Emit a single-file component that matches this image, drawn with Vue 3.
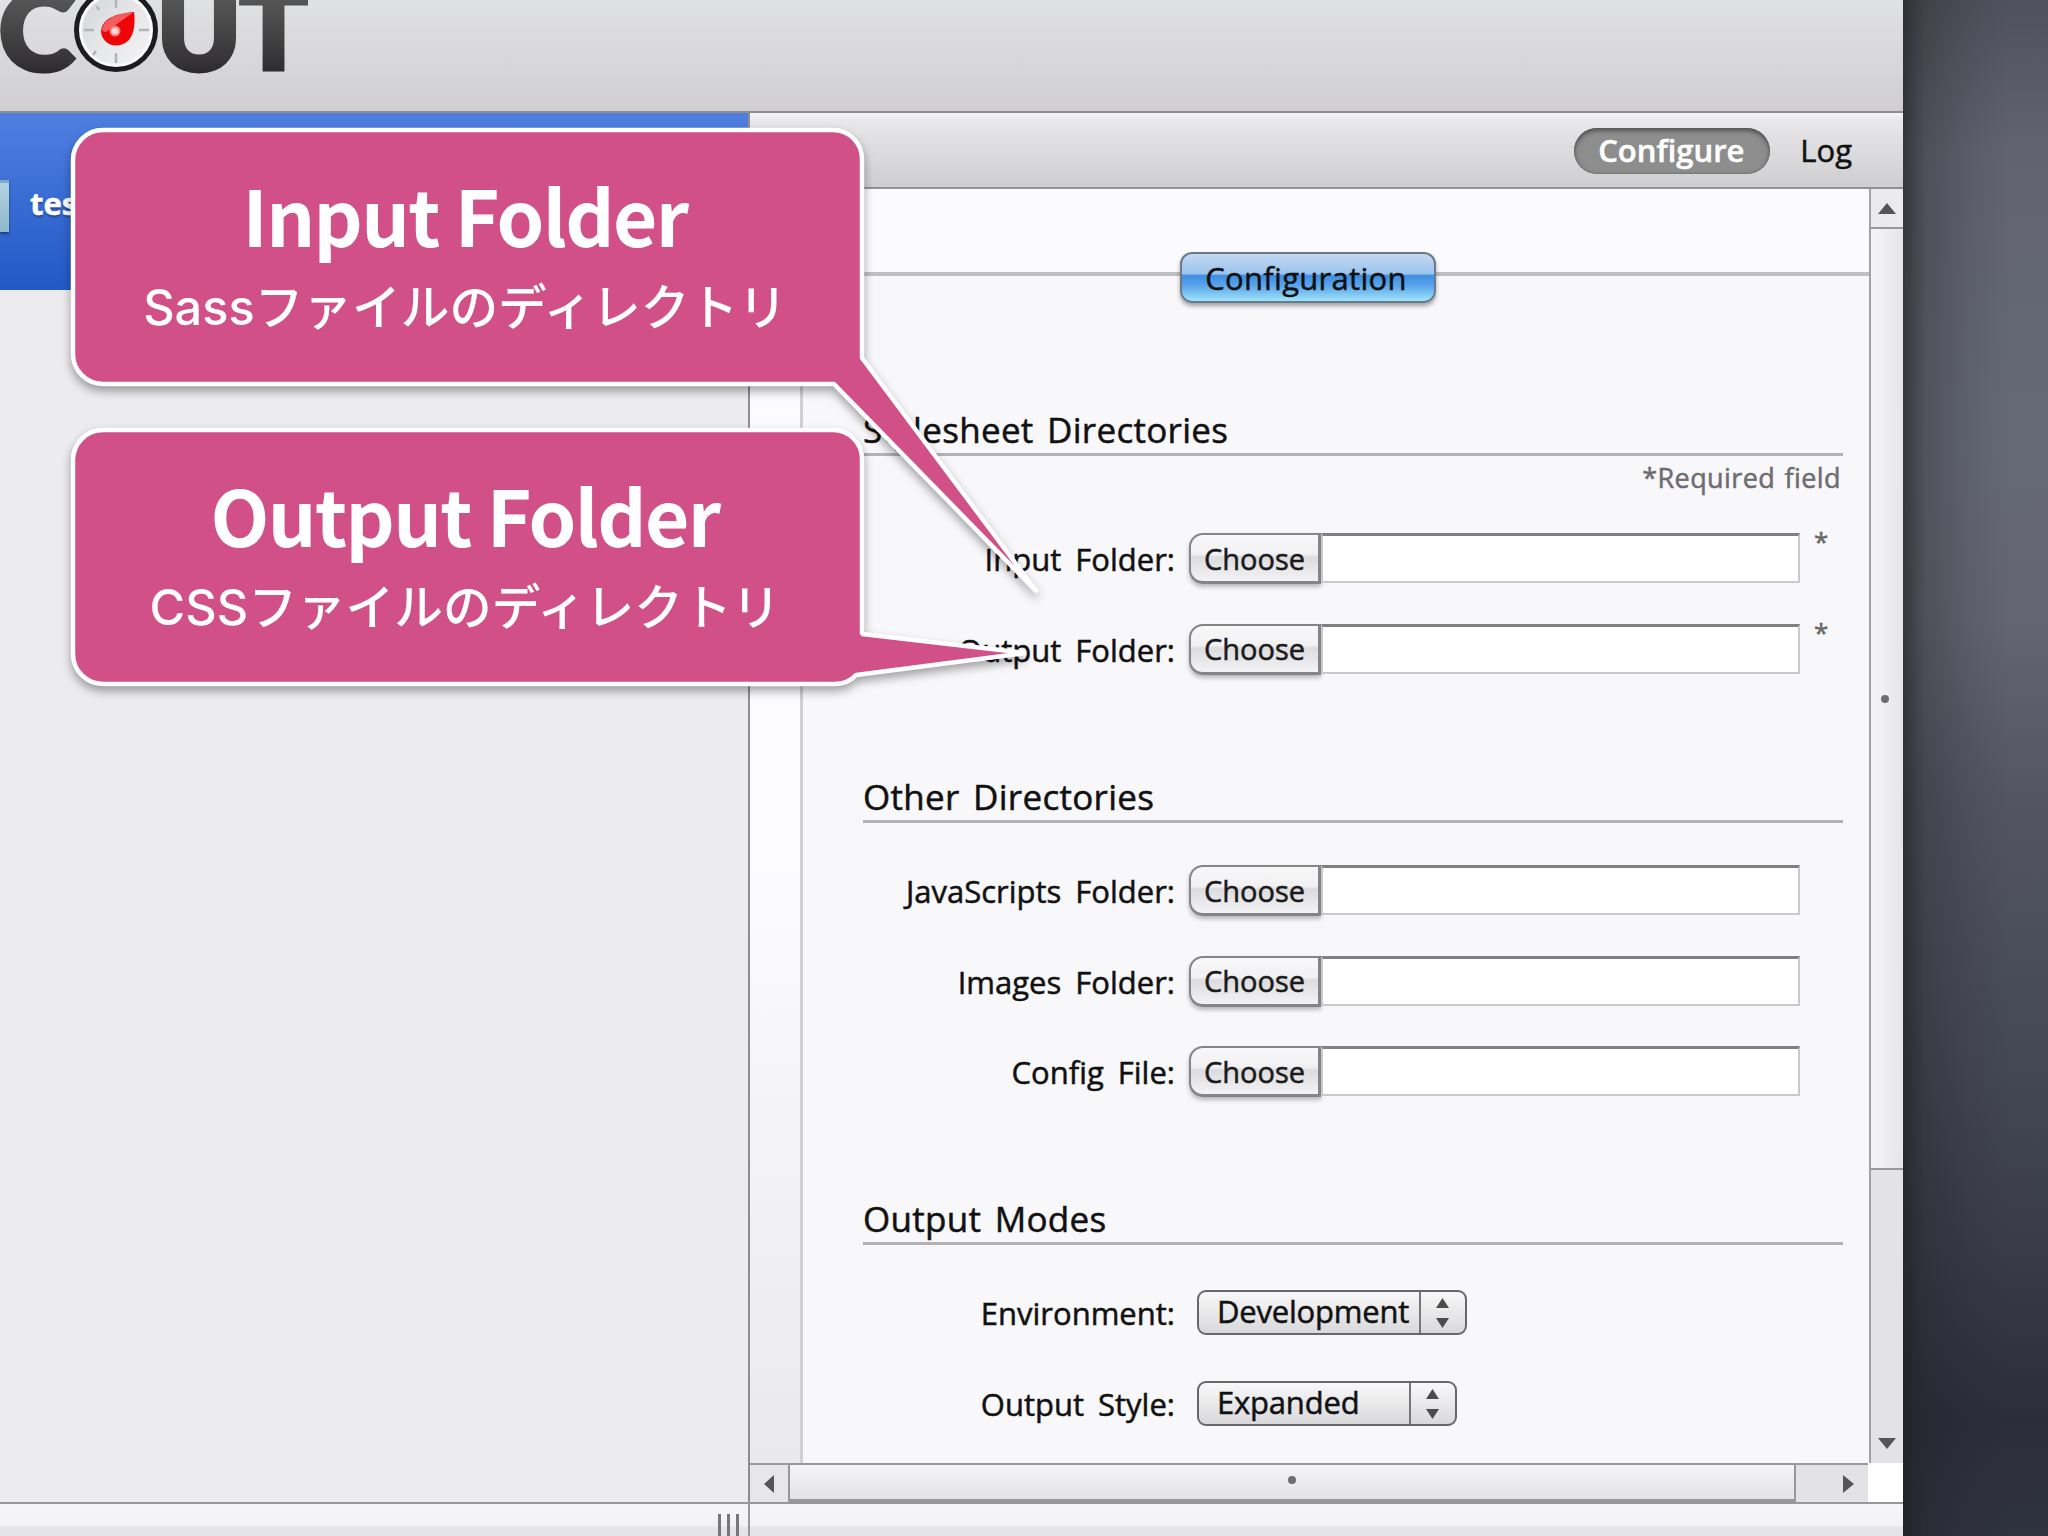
<template>
  <div class="desktop">
    <div class="window">
      <header class="titlebar">
        <svg class="logo" width="320" height="111" viewBox="0 0 320 111">
          <defs>
            <linearGradient id="ink" x1="0" y1="-10" x2="0" y2="74" gradientUnits="userSpaceOnUse">
              <stop offset="0" stop-color="#5a5a5b" />
              <stop offset="0.6" stop-color="#414142" />
              <stop offset="1" stop-color="#2d2a2d" />
            </linearGradient>
            <linearGradient id="dial" x1="0" y1="0" x2="1" y2="1">
              <stop offset="0" stop-color="#d4d5d7" />
              <stop offset="0.5" stop-color="#e6e7e9" />
              <stop offset="1" stop-color="#f4f4f6" />
            </linearGradient>
          </defs>
          <g class="logo-text" fill="url(#ink)" stroke="url(#ink)">
            <text x="-1" y="69.500" textLength="75" lengthAdjust="spacingAndGlyphs">C</text>
            <text x="157" y="69.500" textLength="84" lengthAdjust="spacingAndGlyphs">U</text>
            <text x="240" y="68.500" textLength="67" lengthAdjust="spacingAndGlyphs">T</text>
          </g>
          <circle cx="116" cy="30" r="39.5" fill="#fbfbfc" stroke="#1d1d1f" stroke-width="5" />
          <circle cx="116" cy="30" r="34" fill="url(#dial)" />
          <path d="M116 0v8M116 53v10M84 30h10M139 30h10M97 6l2 4M93 55l3-4" stroke="#b4b4b8" stroke-width="2.5" />
          <path d="M134 12C136 28 133 45 116 45.500C107 45.500 101 38 101 31C102 17 120 13 134 12Z" fill="#ee0508" />
          <path d="M133 12.500C118 13 102 19 102 31L106 32Z" fill="#fff" opacity="0.35" />
          <circle cx="115" cy="31" r="4.500" fill="#fbd5d5" stroke="#f27a7a" stroke-width="2" />
        </svg>
      </header>

      <div class="main">
        <aside class="sidebar">
          <div class="project">
            <span class="folder"></span>
            <span class="project-name">test</span>
          </div>
          <div class="sidebar-body"></div>
        </aside>

        <section class="pane">
          <nav class="tabs">
            <button class="tab active">Configure</button>
            <button class="tab">Log</button>
          </nav>
          <div class="viewport">
            <div class="page">
              <div class="page-top"><span class="pill">Configuration</span></div>
              <div class="page-body">
                <div class="gutter"></div>
                <form class="form">
                  <fieldset v-for="group in groups" :key="group.title" :class="group.name">
                    <h2><span>{{ group.title }}</span></h2>
                    <p v-if="group.note" class="note">{{ group.note }}</p>
                    <div class="rows">
                      <div v-for="field in group.fields" :key="field.label" class="row">
                        <label>{{ field.label }}</label>
                        <div v-if="field.value" class="select">
                          <span class="value" :style="{ width: field.width + 'px' }">{{ field.value }}</span>
                          <svg class="arrows" width="44" height="41" viewBox="0 0 44 41">
                            <path d="M15 16l6.500-10 6.500 10zM15 26l6.500 10 6.500-10z" fill="#4c4c4f" />
                          </svg>
                        </div>
                        <template v-else>
                          <button type="button" class="choose">Choose</button>
                          <div class="path"></div>
                          <span v-if="field.required" class="star">*</span>
                        </template>
                      </div>
                    </div>
                  </fieldset>
                </form>
              </div>
            </div>
            <div class="vbar">
              <div class="vbtn"><svg width="18" height="12"><path d="M0 11L9 0l9 11z" fill="#555558" /></svg></div>
              <div class="vthumb"><i class="dot"></i></div>
              <div class="vtrack"><svg width="18" height="12"><path d="M0 0h18L9 11z" fill="#555558" /></svg></div>
            </div>
          </div>
          <div class="hbar">
            <div class="hbtn"><svg width="11" height="18"><path d="M10 0v18L0 9z" fill="#555558" /></svg></div>
            <div class="hthumb"><i class="dot"></i></div>
            <div class="htrack"><svg width="11" height="18"><path d="M0 0l11 9L0 18z" fill="#555558" /></svg></div>
            <div class="corner"></div>
          </div>
        </section>
      </div>

      <footer class="footer">
        <div class="footer-left"><i></i><i></i><i></i></div>
      </footer>
    </div>

    <div v-for="c in callouts" :key="c.title" class="callout" :class="c.name">
      <svg class="bubble" width="990" height="480" viewBox="0 0 990 480">
        <path :d="c.shape" fill="#d15087" stroke="#fff" stroke-width="4.500" stroke-linejoin="bevel" />
      </svg>
      <div class="callout-text">
        <strong>{{ c.title }}</strong>
        <span>{{ c.text }}</span>
      </div>
    </div>
  </div>
</template>

<script setup>
const groups = [
  {
    name: 'stylesheets',
    title: 'Stylesheet Directories',
    note: '*Required field',
    fields: [
      { label: 'Input Folder:', required: true },
      { label: 'Output Folder:', required: true }
    ]
  },
  {
    name: 'others',
    title: 'Other Directories',
    fields: [
      { label: 'JavaScripts Folder:' },
      { label: 'Images Folder:' },
      { label: 'Config File:' }
    ]
  },
  {
    name: 'modes',
    title: 'Output Modes',
    fields: [
      { label: 'Environment:', value: 'Development', width: 222 },
      { label: 'Output Style:', value: 'Expanded', width: 212 }
    ]
  }
]

// bubble outlines, relative to the top left corner of each callout
const callouts = [
  {
    name: 'input',
    title: 'Input Folder',
    text: 'Sassファイルのディレクトリ',
    shape: 'M32 2H762A29 29 0 0 1 791 31V230L966 464L763 256H32A30 30 0 0 1 2 226V32A30 30 0 0 1 32 2Z'
  },
  {
    name: 'output',
    title: 'Output Folder',
    text: 'CSSファイルのディレクトリ',
    shape: 'M32 2H762A29 29 0 0 1 791 31V206L955 225L785 247Q777 256 763 256H32A30 30 0 0 1 2 226V32A30 30 0 0 1 32 2Z'
  }
]
</script>

<style>
body {
  overflow: hidden;
}
</style>

<style scoped>
* {
  box-sizing: border-box;
}

.desktop {
  position: relative;
  width: 2048px;
  height: 1536px;
  overflow: hidden;
  font-family: "Open Sans", "Noto Sans", sans-serif;
  color: #111;
  background:
    linear-gradient(to right, rgba(30, 30, 30, 0.65) 1903px, rgba(30, 30, 34, 0.3) 1925px, rgba(30, 30, 34, 0.1) 1970px, rgba(30, 30, 34, 0) 2010px),
    linear-gradient(#4f525c 0, #616470 150px, #666a76 450px, #636571 620px, #535562 800px, #454855 1050px, #393b48 1250px, #2c2d3a 1420px, #2f323f 1536px);
}

.window {
  display: flex;
  flex-direction: column;
  width: 1903px;
  height: 1536px;
  -webkit-text-stroke: 0.5px;
}

.titlebar {
  flex: 0 0 113px;
  border-bottom: 2px solid #8e8d91;
  background: linear-gradient(#e0e1e3, #d0ced1);
}

.logo {
  display: block;
}

.logo-text {
  font: 900 108px Lato, sans-serif;
  stroke-width: 5px;
  -webkit-text-stroke: 0;
}

.logo-text text {
  stroke: url(#ink);
  stroke-width: 5px;
}

.main {
  display: flex;
  flex: 0 0 1389px;
  min-height: 0;
}

.sidebar {
  flex: 0 0 750px;
  border-right: 2px solid #8e8d92;
  background: #ecebee;
}

.project {
  display: flex;
  align-items: center;
  height: 177px;
  background: linear-gradient(#4f7fe0, #2259c6);
}

.folder {
  width: 9px;
  height: 52px;
  margin-top: 8px;
  background: linear-gradient(#b3d2df, #8fb9cf);
  border-top: 3px solid #7ea9c6;
  box-shadow: 0 2px 3px rgba(0, 0, 0, 0.4);
}

.project-name {
  margin-left: 21px;
  margin-top: 2px;
  font-size: 31px;
  font-weight: 700;
  color: #fff;
  text-shadow: 0 2px 2px rgba(0, 0, 0, 0.35);
}

.pane {
  display: flex;
  flex-direction: column;
  flex: 1;
  min-height: 0;
}

.tabs {
  display: flex;
  justify-content: flex-end;
  align-items: center;
  flex: 0 0 76px;
  padding: 2px 39px 0 0;
  border-bottom: 2px solid #929195;
  background: linear-gradient(#f7f6f8 0, #e8e7e9 8px, #cecdcf);
}

.tab {
  height: 46px;
  padding: 0 12px 3px;
  border: 0;
  background: none;
  font: 500 31px/40px "Open Sans", "Noto Sans", sans-serif;
  color: #111;
}

.tab.active {
  width: 196px;
  margin-right: 18px;
  padding: 0 2px 3px 0;
  border-radius: 23px;
  background: #8d8d8d;
  box-shadow: inset 0 3px 4px #555, inset 0 0 3px #666;
  font-weight: 600;
  color: #fff;
}

.viewport {
  display: flex;
  flex: 1;
  min-height: 0;
}

.page {
  display: flex;
  flex-direction: column;
  flex: 1;
  overflow: hidden;
  background: #f8f7fa;
}

.page-top {
  display: flex;
  justify-content: center;
  align-items: flex-end;
  flex: 0 0 87px;
  padding-right: 4px;
  border-bottom: 4px solid #bfbec1;
  background: #fbfafc;
}

.pill {
  z-index: 1;
  width: 256px;
  height: 51px;
  margin-bottom: -31px;
  padding-right: 3px;
  border: 2px solid #6c7a8c;
  border-radius: 12px;
  background: linear-gradient(#c3d8f0 0, #9cc4ee 42%, #3f8de2 46%, #5ba5ea 68%, #9fe4fb 100%);
  box-shadow: 0 3px 4px rgba(0, 0, 0, 0.35);
  font-size: 31px;
  line-height: 48px;
  letter-spacing: 0.3px;
  text-align: center;
}

.page-body {
  display: flex;
  flex: 1;
  min-height: 0;
}

.gutter {
  flex: 0 0 53px;
  border-right: 3px solid #d0cfd2;
  background: linear-gradient(#fcfbfd 50%, #e9e8eb);
}

.form {
  flex: 1;
  padding: 127px 26px 0 60px;
}

fieldset {
  margin: 0;
  padding: 0;
  border: 0;
}

.stylesheets {
  height: 367px;
}

.others {
  height: 422px;
}

h2 {
  height: 53px;
  margin: 0;
  border-bottom: 3px solid #b3b2b5;
  font-size: 35px;
  font-weight: 400;
  line-height: 53px;
  letter-spacing: 0.3px;
  word-spacing: 4px;
}

.note {
  height: 50px;
  margin: 0;
  padding-right: 2px;
  font-size: 27px;
  line-height: 44px;
  letter-spacing: 0.4px;
  word-spacing: 2px;
  text-align: right;
  color: #6d6c70;
}

.rows {
  padding-top: 42px;
}

.note + .rows {
  padding-top: 27px;
}

.row {
  display: flex;
  height: 50px;
  margin-bottom: 40.500px;
}

label {
  width: 312px;
  margin-right: 14px;
  font-size: 31px;
  line-height: 52px;
  word-spacing: 6px;
  text-align: right;
  white-space: nowrap;
}

.choose {
  width: 132px;
  height: 51px;
  padding: 0;
  border: 2px solid #858487;
  border-right-width: 3px;
  border-bottom-width: 3px;
  border-radius: 14px 0 0 14px;
  background: linear-gradient(#f8f8f9 0, #f1f0f2 42%, #dcdbde 48%, #f3f2f4 100%);
  box-shadow: 0 3px 4px rgba(0, 0, 0, 0.25);
  font: 400 29px/43px "Open Sans", "Noto Sans", sans-serif;
  color: #1a1a1a;
}

.path {
  width: 479px;
  height: 50px;
  border: 2px solid #c9c8cb;
  border-top: 3px solid #808083;
  background: #fff;
}

.star {
  margin-left: 14px;
  margin-top: -9px;
  font-size: 26px;
  line-height: 34px;
  color: #666;
}

.select {
  display: flex;
  height: 45px;
  margin-left: 8px;
  margin-top: 3px;
  border: 2px solid #68676a;
  border-radius: 9px;
  background: linear-gradient(#f8f8f9, #d9d8da);
}

.value {
  padding-left: 18px;
  border-right: 2px solid #77767a;
  font-size: 31px;
  line-height: 38px;
  letter-spacing: -0.2px;
}

.vbar {
  display: flex;
  flex-direction: column;
  flex: 0 0 34px;
  border-left: 2px solid #a2a1a5;
}

.vbtn {
  display: flex;
  justify-content: center;
  flex: 0 0 40px;
  padding-top: 14px;
  border-bottom: 2px solid #98979b;
  background: #ebeaed;
}

.vthumb {
  display: flex;
  justify-content: center;
  align-items: center;
  flex: 0 0 941px;
  padding-right: 4px;
  border-bottom: 2px solid #98979b;
  background: linear-gradient(to right, #f5f4f6, #e6e5e8);
}

.dot {
  width: 8px;
  height: 8px;
  border-radius: 50%;
  background: #6e6d70;
}

.vtrack {
  display: flex;
  justify-content: center;
  align-items: flex-end;
  flex: 1;
  padding-bottom: 13px;
  background: #e3e2e5;
}

.hbar {
  display: flex;
  flex: 0 0 39px;
}

.hbtn {
  display: flex;
  justify-content: center;
  align-items: center;
  flex: 0 0 38px;
  border-top: 2px solid #9a999d;
  background: #e7e6e9;
}

.hthumb {
  display: flex;
  justify-content: center;
  align-items: center;
  flex: 0 0 1008px;
  padding-bottom: 4px;
  border: 2px solid #98979b;
  border-bottom: 3px solid #98979b;
  background: linear-gradient(#f4f3f5, #e3e2e5);
}

.htrack {
  display: flex;
  justify-content: flex-end;
  align-items: center;
  flex: 1;
  padding-right: 14px;
  border-top: 2px solid #9a999d;
  background: #e3e2e5;
}

.corner {
  flex: 0 0 35px;
  background: #fff;
}

.footer {
  flex: 1;
  border-top: 2px solid #98979b;
  background: linear-gradient(#f6f5f7 0, #f2f1f4 22px, #e5e4e7 23px);
}

.footer-left {
  display: flex;
  justify-content: flex-end;
  gap: 6px;
  width: 750px;
  height: 32px;
  padding: 10px 9px 0 0;
  border-right: 2px solid #98979b;
}

.footer-left i {
  width: 3px;
  background: #77767a;
}

/* callouts float over the window */
.callout {
  position: absolute;
  left: 71px;
  width: 793px;
  height: 258px;
}

.input {
  top: 128px;
}

.output {
  top: 428px;
}

.bubble {
  position: absolute;
  left: 0;
  top: 0;
  overflow: visible;
  filter: drop-shadow(0 5px 5px rgba(0, 0, 0, 0.35));
}

.callout-text {
  position: relative;
  display: flex;
  flex-direction: column;
  align-items: center;
  padding: 42px 5px 0 0;
  color: #fff;
  white-space: nowrap;
}

.callout-text strong {
  font-family: "Noto Sans CJK JP", sans-serif;
  font-size: 76.500px;
  font-weight: 700;
  line-height: 88px;
  letter-spacing: -1.600px;
}

.callout-text span {
  margin-top: 5px;
  font: 500 48.700px/90px "Inter", "Noto Sans CJK JP", sans-serif;
}
</style>
